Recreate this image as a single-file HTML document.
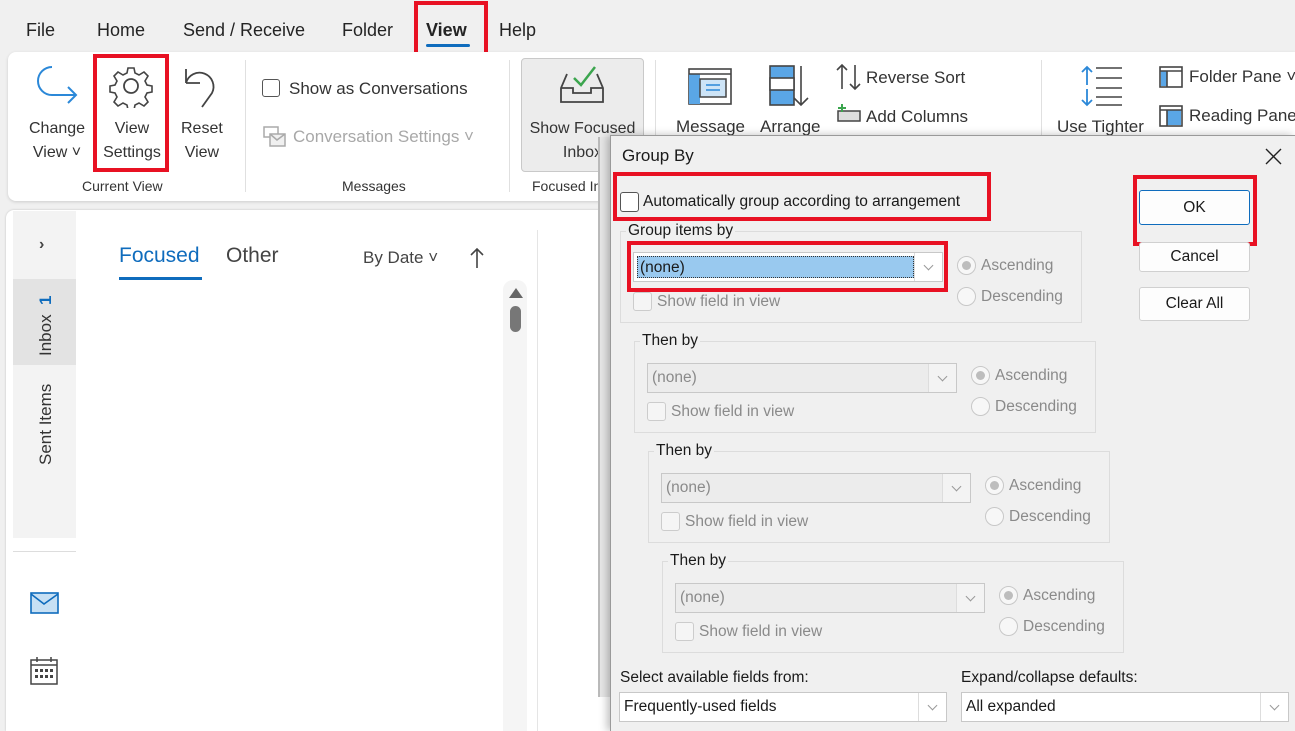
<!DOCTYPE html>
<html><head><meta charset="utf-8"><style>
*{box-sizing:border-box;margin:0;padding:0}
html{width:1295px;height:731px;overflow:hidden}
body{width:1295px;height:731px;overflow:hidden;background:#f0f0f0;font-family:"Liberation Sans",sans-serif;position:relative;color:#242424}
.a{position:absolute;white-space:nowrap}
.red{position:absolute;border:4px solid #e81123}
.t{font-size:18px;color:#242424}
.r{font-size:16px;color:#333}
.d{font-size:15.5px;color:#1a1a1a}
.g{color:#8a8a8a}
.cb{position:absolute;width:18px;height:18px;border:1px solid #555;border-radius:3px;background:#fff}
.cbg{position:absolute;width:19px;height:19px;border:1px solid #ccc;border-radius:3px;background:#f5f5f5}
.rad{position:absolute;width:19px;height:19px;border:1px solid #c8c8c8;border-radius:50%;background:#f7f7f7}
.rad.on::after{content:"";position:absolute;left:4px;top:4px;width:9px;height:9px;border-radius:50%;background:#bdbdbd}
.box{position:absolute;border:1px solid #dcdcdc}
.leg{position:absolute;background:#f0f0f0;padding:0 2px;font-size:15.5px;color:#1a1a1a}
.combo{position:absolute;border:1px solid #c8c8c8;background:#ececec;font-size:15.5px;color:#8a8a8a;padding:5px 4px}
.combo .ar{position:absolute;right:0;top:0;bottom:0;width:28px;border-left:1px solid #ddd;background:#f3f3f3}
.combo .ar::after{content:"";position:absolute;left:10px;top:9px;width:6px;height:6px;border-right:1px solid #999;border-bottom:1px solid #999;transform:rotate(45deg)}
.btn{position:absolute;border:1px solid #d0d0d0;border-radius:3px;background:#fdfdfd;font-size:15.5px;text-align:center;color:#1a1a1a}
</style></head><body>
<div class="a t" style="left:26px;top:20px">File</div>
<div class="a t" style="left:97px;top:20px">Home</div>
<div class="a t" style="left:183px;top:20px">Send / Receive</div>
<div class="a t" style="left:342px;top:20px">Folder</div>
<div class="a t" style="left:426px;top:20px;font-weight:bold">View</div>
<div class="a" style="left:426px;top:44px;width:44px;height:3px;background:#0f6cbd;border-radius:2px"></div>
<div class="a t" style="left:499px;top:20px">Help</div>
<div class="red" style="left:414px;top:1px;width:74px;height:60px"></div>
<div class="a" style="left:8px;top:52px;width:1287px;height:149px;background:#fff;border-radius:8px 0 0 8px;box-shadow:0 1px 3px rgba(0,0,0,.15)"></div>
<svg class="a" style="left:30px;top:63px" width="50" height="45"><path d="M22 4 A14 14 0 1 0 22 32 H46 M38 24 L46 32 L38 40" fill="none" stroke="#2b88d8" stroke-width="2"/></svg>
<div class="a r" style="left:29px;top:117px;text-align:center;line-height:24px">Change<br>View ˅</div>
<svg class="a" style="left:108px;top:64px" width="46" height="44"><circle cx="23" cy="22" r="7" fill="none" stroke="#444" stroke-width="1.8"/><path d="M20 4h6l1 5 4 2 5-3 4 4-3 5 2 4 5 1v6l-5 1-2 4 3 5-4 4-5-3-4 2-1 5h-6l-1-5-4-2-5 3-4-4 3-5-2-4-5-1v-6l5-1 2-4-3-5 4-4 5 3 4-2z" fill="none" stroke="#444" stroke-width="1.6"/></svg>
<div class="a r" style="left:99px;top:117px;width:66px;text-align:center;line-height:24px">View<br>Settings</div>
<div class="red" style="left:93px;top:54px;width:76px;height:118px"></div>
<svg class="a" style="left:180px;top:63px" width="46" height="46"><path d="M6 20 V6 M6 20 H20 M6 20 A14 14 0 1 1 32 30 L22 44" fill="none" stroke="#444" stroke-width="1.8"/></svg>
<div class="a r" style="left:181px;top:117px;text-align:center;line-height:24px">Reset<br>View</div>
<div class="a r" style="left:82px;top:178px;font-size:14px">Current View</div>
<div class="a" style="left:245px;top:60px;width:1px;height:132px;background:#e0e0e0"></div>
<div class="cb" style="left:262px;top:79px"></div>
<div class="a r" style="left:289px;top:79px;font-size:17px">Show as Conversations</div>
<svg class="a" style="left:262px;top:124px" width="26" height="26"><rect x="2" y="3" width="14" height="10" fill="none" stroke="#aaa" stroke-width="1.5"/><rect x="8" y="10" width="15" height="12" fill="#f0f0f0" stroke="#aaa" stroke-width="1.5"/><path d="M8 10 L15 16 L23 10" fill="none" stroke="#aaa" stroke-width="1.5"/></svg>
<div class="a r g" style="left:293px;top:127px;font-size:17px;color:#a8a8a8">Conversation Settings ˅</div>
<div class="a r" style="left:342px;top:178px;font-size:14px">Messages</div>
<div class="a" style="left:509px;top:60px;width:1px;height:132px;background:#e0e0e0"></div>
<div class="a" style="left:521px;top:58px;width:123px;height:114px;background:#ececec;border:1px solid #c9c9c9;border-radius:4px"></div>
<svg class="a" style="left:558px;top:64px" width="48" height="40"><path d="M9 10 L3 24 V38 H45 V24 L39 10 M3 24 H15 V29 H33 V24 H45" fill="none" stroke="#444" stroke-width="1.8"/><path d="M16 14 L23 21 L37 3" fill="none" stroke="#3ba54e" stroke-width="2.5"/></svg>
<div class="a r" style="left:525px;top:117px;width:115px;text-align:center;line-height:24px">Show Focused<br>Inbox</div>
<div class="a r" style="left:532px;top:178px;font-size:14px">Focused In</div>
<div class="a" style="left:655px;top:60px;width:1px;height:80px;background:#e0e0e0"></div>
<svg class="a" style="left:688px;top:68px" width="44" height="38"><rect x="1" y="1" width="42" height="35" fill="#fff" stroke="#444" stroke-width="1.6"/><rect x="1" y="6" width="11" height="30" fill="#5aa6e6"/><rect x="12" y="11" width="26" height="18" fill="#cde4f7" stroke="#444" stroke-width="1.5"/><path d="M18 17 H32 M18 22 H32" stroke="#2b88d8" stroke-width="1.5"/><path d="M1 6 H43" stroke="#444" stroke-width="1.6"/></svg>
<div class="a r" style="left:676px;top:117px;font-size:17px">Message</div>
<svg class="a" style="left:768px;top:64px" width="44" height="46"><rect x="2" y="2" width="24" height="39" fill="#5aa6e6" stroke="#444" stroke-width="1.6"/><rect x="2" y="14" width="24" height="12" fill="#fff" stroke="#444" stroke-width="1.6"/><path d="M33 2 V40 M26 34 L33 41 L40 34" fill="none" stroke="#444" stroke-width="1.6"/></svg>
<div class="a r" style="left:760px;top:117px;font-size:17px">Arrange</div>
<svg class="a" style="left:835px;top:63px" width="28" height="28"><path d="M7 2 V26 M2 7 L7 2 L12 7 M20 2 V26 M15 21 L20 26 L25 21" fill="none" stroke="#444" stroke-width="1.6"/></svg>
<div class="a r" style="left:866px;top:68px;font-size:17px">Reverse Sort</div>
<svg class="a" style="left:836px;top:103px" width="26" height="22"><rect x="2" y="8" width="22" height="10" fill="#ddd" stroke="#444" stroke-width="1.5"/><path d="M6 1 V9 M2 5 H10" stroke="#3ba54e" stroke-width="2"/></svg>
<div class="a r" style="left:866px;top:107px;font-size:17px">Add Columns</div>
<div class="a" style="left:1041px;top:60px;width:1px;height:80px;background:#e0e0e0"></div>
<svg class="a" style="left:1078px;top:64px" width="48" height="44"><path d="M9 3 V21 M4 8 L9 3 L14 8 M9 25 V41 M4 36 L9 41 L14 36" fill="none" stroke="#2b88d8" stroke-width="1.8"/><path d="M18 4 H44 M18 14 H44 M18 24 H44 M18 33 H44 M18 41 H44" stroke="#444" stroke-width="1.6"/></svg>
<div class="a r" style="left:1057px;top:117px;font-size:17px">Use Tighter</div>
<svg class="a" style="left:1159px;top:66px" width="24" height="22"><rect x="1" y="1" width="22" height="20" fill="#fff" stroke="#444" stroke-width="1.6"/><rect x="2" y="5" width="6" height="15" fill="#5aa6e6"/><path d="M1 5 H23 M8 5 V21" stroke="#444" stroke-width="1.6"/></svg>
<div class="a r" style="left:1189px;top:67px;font-size:17px">Folder Pane ˅</div>
<svg class="a" style="left:1159px;top:105px" width="24" height="22"><rect x="1" y="1" width="22" height="20" fill="#fff" stroke="#444" stroke-width="1.6"/><rect x="8" y="5" width="14" height="15" fill="#5aa6e6"/><path d="M1 5 H23 M8 5 V21" stroke="#444" stroke-width="1.6"/></svg>
<div class="a r" style="left:1189px;top:106px;font-size:17px">Reading Pane</div>
<div class="a" style="left:6px;top:210px;width:620px;height:521px;background:#fff;border-radius:8px 8px 0 0;box-shadow:0 0 2px rgba(0,0,0,.2)"></div>
<div class="a" style="left:13px;top:211px;width:63px;height:327px;background:#f3f3f3"></div>
<div class="a" style="left:13px;top:279px;width:63px;height:86px;background:#e3e3e3"></div>
<div class="a" style="left:39px;top:236px;font-size:16px;font-weight:bold;color:#444">›</div>
<div class="a" style="left:36px;top:356px;transform:rotate(-90deg);transform-origin:0 0;font-size:17px;color:#333">Inbox &nbsp;<b style="color:#0f6cbd">1</b></div>
<div class="a" style="left:36px;top:465px;transform:rotate(-90deg);transform-origin:0 0;font-size:17px;color:#333">Sent Items</div>
<div class="a" style="left:13px;top:551px;width:63px;height:1px;background:#ddd"></div>
<svg class="a" style="left:30px;top:592px" width="30" height="24"><rect x="1" y="1" width="27" height="20" fill="#c7e0f4" stroke="#0f6cbd" stroke-width="1.6"/><path d="M1 2 L14 12 L28 2" fill="none" stroke="#0f6cbd" stroke-width="1.6"/></svg>
<svg class="a" style="left:30px;top:656px" width="30" height="30"><rect x="1" y="4" width="26" height="24" fill="none" stroke="#444" stroke-width="1.5"/><path d="M1 9 H27 M7 1 V6 M21 1 V6" stroke="#444" stroke-width="1.5"/><g fill="#444"><rect x="5" y="13" width="3" height="3"/><rect x="10" y="13" width="3" height="3"/><rect x="15" y="13" width="3" height="3"/><rect x="20" y="13" width="3" height="3"/><rect x="5" y="19" width="3" height="3"/><rect x="10" y="19" width="3" height="3"/><rect x="15" y="19" width="3" height="3"/><rect x="20" y="19" width="3" height="3"/></g></svg>
<div class="a" style="left:119px;top:244px;font-size:21px;color:#0f6cbd">Focused</div>
<div class="a" style="left:119px;top:277px;width:83px;height:3px;background:#0f6cbd"></div>
<div class="a" style="left:226px;top:244px;font-size:21px;color:#444">Other</div>
<div class="a" style="left:363px;top:248px;font-size:17px;color:#444">By Date ˅</div>
<svg class="a" style="left:469px;top:247px" width="16" height="22"><path d="M8 2 V21 M2 8 L8 2 L14 8" fill="none" stroke="#444" stroke-width="1.6"/></svg>
<div class="a" style="left:503px;top:280px;width:24px;height:451px;background:#f5f5f5;border-radius:10px 10px 0 0"></div>
<div class="a" style="left:509px;top:288px;width:0;height:0;border-left:7px solid transparent;border-right:7px solid transparent;border-bottom:10px solid #666"></div>
<div class="a" style="left:510px;top:306px;width:11px;height:26px;background:#777;border-radius:6px"></div>
<div class="a" style="left:537px;top:230px;width:1px;height:501px;background:#e5e5e5"></div>
<div class="a" style="left:538px;top:231px;width:70px;height:428px;background:#fff"></div>
<div class="a" style="left:598px;top:137px;width:12px;height:560px;background:#e8e8e8;border-left:2px solid #bbb"></div>
<div class="a" style="left:610px;top:135px;width:685px;height:596px;background:#f0f0f0;border-left:1px solid #9a9a9a;border-top:1px solid #9a9a9a;box-shadow:-3px 0 8px rgba(0,0,0,.25)"></div>
<div class="a" style="left:622px;top:146px;font-size:17px;color:#1a1a1a">Group By</div>
<svg class="a" style="left:1265px;top:148px" width="17" height="17"><path d="M1 1 L16 16 M16 1 L1 16" stroke="#222" stroke-width="1.4"/></svg>
<div class="cb" style="left:620px;top:192px;width:19px;height:20px"></div>
<div class="a d" style="left:643px;top:193px">Automatically group according to arrangement</div>
<div class="red" style="left:613px;top:172px;width:378px;height:49px"></div>
<div class="btn" style="left:1139px;top:190px;width:111px;height:35px;border:1px solid #0f6cbd;line-height:33px">OK</div>
<div class="red" style="left:1133px;top:175px;width:124px;height:71px"></div>
<div class="btn" style="left:1139px;top:242px;width:111px;height:30px;line-height:28px">Cancel</div>
<div class="btn" style="left:1139px;top:287px;width:111px;height:34px;line-height:32px">Clear All</div>
<div class="box" style="left:620px;top:231px;width:462px;height:92px"></div>
<div class="leg" style="left:626px;top:222px">Group items by</div>
<div class="combo" style="left:633px;top:252px;width:310px;height:30px;background:#fff;color:#1a1a1a;padding:0"><div style="position:absolute;left:3px;top:3px;width:277px;height:22px;background:#99c9ef;border:1px dotted #333;padding:2px 2px;font-size:15.5px">(none)</div><div class="ar" style="background:#fff"></div></div>
<div class="red" style="left:627px;top:241px;width:321px;height:51px"></div>
<div class="rad on" style="left:957px;top:256px"></div><div class="a d g" style="left:981px;top:257px">Ascending</div>
<div class="rad" style="left:957px;top:287px"></div><div class="a d g" style="left:981px;top:288px">Descending</div>
<div class="cbg" style="left:633px;top:292px"></div><div class="a d g" style="left:657px;top:293px">Show field in view</div>
<div class="box" style="left:634px;top:341px;width:462px;height:92px"></div>
<div class="leg" style="left:640px;top:332px">Then by</div>
<div class="combo" style="left:647px;top:363px;width:310px;height:30px">(none)<div class="ar"></div></div>
<div class="rad on" style="left:971px;top:366px"></div><div class="a d g" style="left:995px;top:367px">Ascending</div>
<div class="rad" style="left:971px;top:397px"></div><div class="a d g" style="left:995px;top:398px">Descending</div>
<div class="cbg" style="left:647px;top:402px"></div><div class="a d g" style="left:671px;top:403px">Show field in view</div>
<div class="box" style="left:648px;top:451px;width:462px;height:92px"></div>
<div class="leg" style="left:654px;top:442px">Then by</div>
<div class="combo" style="left:661px;top:473px;width:310px;height:30px">(none)<div class="ar"></div></div>
<div class="rad on" style="left:985px;top:476px"></div><div class="a d g" style="left:1009px;top:477px">Ascending</div>
<div class="rad" style="left:985px;top:507px"></div><div class="a d g" style="left:1009px;top:508px">Descending</div>
<div class="cbg" style="left:661px;top:512px"></div><div class="a d g" style="left:685px;top:513px">Show field in view</div>
<div class="box" style="left:662px;top:561px;width:462px;height:92px"></div>
<div class="leg" style="left:668px;top:552px">Then by</div>
<div class="combo" style="left:675px;top:583px;width:310px;height:30px">(none)<div class="ar"></div></div>
<div class="rad on" style="left:999px;top:586px"></div><div class="a d g" style="left:1023px;top:587px">Ascending</div>
<div class="rad" style="left:999px;top:617px"></div><div class="a d g" style="left:1023px;top:618px">Descending</div>
<div class="cbg" style="left:675px;top:622px"></div><div class="a d g" style="left:699px;top:623px">Show field in view</div>
<div class="a d" style="left:620px;top:669px">Select available fields from:</div>
<div class="combo" style="left:619px;top:692px;width:328px;height:30px;background:#fff;color:#1a1a1a">Frequently-used fields<div class="ar" style="background:#fff"></div></div>
<div class="a d" style="left:961px;top:669px">Expand/collapse defaults:</div>
<div class="combo" style="left:961px;top:692px;width:328px;height:30px;background:#fff;color:#1a1a1a">All expanded<div class="ar" style="background:#fff"></div></div>
</body></html>
